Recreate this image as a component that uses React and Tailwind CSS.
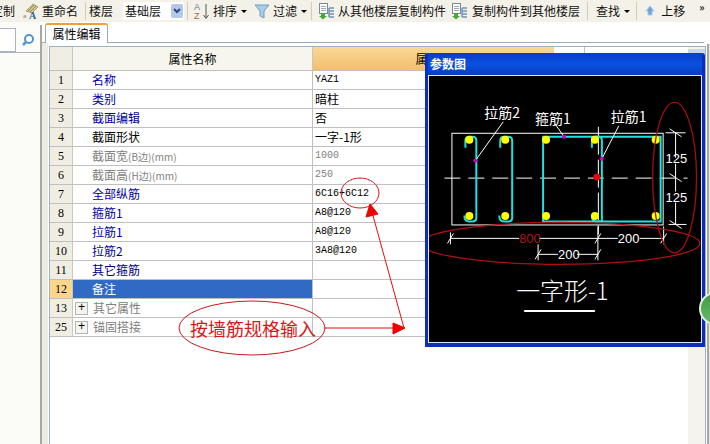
import React from 'react';

const rows = [
  { n: '1', name: '名称', value: 'YAZ1', c: 'text-[#0000a0]' },
  { n: '2', name: '类别', value: '暗柱', c: 'text-[#0000a0]' },
  { n: '3', name: '截面编辑', value: '否', c: 'text-[#0000a0]' },
  { n: '4', name: '截面形状', value: '一字-1形', c: 'text-black' },
  { n: '5', name: '截面宽', unit: '(B边)(mm)', value: '1000', c: 'text-[#808080]', gray: true },
  { n: '6', name: '截面高', unit: '(H边)(mm)', value: '250', c: 'text-[#808080]', gray: true },
  { n: '7', name: '全部纵筋', value: '6C16+6C12', c: 'text-[#0000a0]' },
  { n: '8', name: '箍筋1', value: 'A8@120', c: 'text-[#0000a0]' },
  { n: '9', name: '拉筋1', value: 'A8@120', c: 'text-[#0000a0]' },
  { n: '10', name: '拉筋2', value: '3A8@120', c: 'text-[#0000a0]' },
  { n: '11', name: '其它箍筋', value: '', c: 'text-[#000080]' },
  { n: '12', name: '备注', value: '', c: 'text-white', selected: true },
  { n: '13', name: '其它属性', value: '', c: 'text-[#808080]', plus: true },
  { n: '25', name: '锚固搭接', value: '', c: 'text-[#808080]', plus: true },
];

const Sep = ({ className }) => <div className={`w-px h-[18px] bg-[#d0ccb8] ${className}`} />;
const Caret = () => <span className="ml-[4px] w-0 h-0 border-x-[3px] border-x-transparent border-t-[3px] border-t-black" />;

function CopyIcon() {
  return (
    <svg width="17" height="18" viewBox="0 0 17 18">
      <rect x="1.500" y="1.500" width="8" height="10" fill="#fff" stroke="#7a8a9a" />
      <path d="M3 4.500h5M3 6.500h5M3 8.500h5" stroke="#9ab" />
      <path d="M3 11h4v3h2l-4 3.500L1 14h2z" fill="#4aa83a" />
      <path d="M11 6h5M11 9h5M11 12h5M11 15h5M11 6v9" stroke="#6f93b8" strokeWidth="1.500" fill="none" />
    </svg>
  );
}

function Toolbar() {
  return (
    <div className="h-[22px] shrink-0 flex items-center bg-[#f4f2e8] text-[12px] text-[#111] whitespace-nowrap overflow-hidden">
      <span className="-ml-[9px]">定制</span>
      <svg className="ml-[8px]" width="16" height="16" viewBox="0 0 16 16">
        <path d="M3 8l7-7 5 3-6 6z" fill="#d8c890" stroke="#a8a070" />
        <path d="M5 8l6-6M7 9l6-6" stroke="#8a8a60" />
        <text x="0" y="15" fontSize="6" fontFamily="Liberation Sans" fill="#808878">a</text>
        <text x="6" y="16" fontSize="10" fontWeight="700" fontFamily="Liberation Serif" fill="#27609c">A</text>
      </svg>
      <span className="ml-[3px]">重命名</span>
      <Sep className="ml-[7px] mr-[3px]" />
      <span>楼层</span>
      <div className="ml-[10px] w-[61px] h-[18px] bg-white flex items-center justify-between">
        <span className="ml-[2px]">基础层</span>
        <span className="w-[12px] h-[14px] bg-[#b4c8ea] flex items-center justify-center rounded-[2px] mr-[1px]">
          <svg width="8" height="6" viewBox="0 0 8 6"><path d="M1 1l3 3 3-3" stroke="#2a4a80" strokeWidth="2" fill="none" /></svg>
        </span>
      </div>
      <Sep className="ml-[3px] mr-[5px]" />
      <svg width="18" height="18" viewBox="0 0 18 18">
        <text x="1" y="8" fontSize="9" fontFamily="Liberation Sans" fill="#5a7aa0">A</text>
        <text x="1" y="17" fontSize="9" fontFamily="Liberation Sans" fill="#a06a50">Z</text>
        <path d="M13 2v14M10.500 13l2.500 3.500 2.500-3.500" stroke="#555" fill="none" />
      </svg>
      <span className="ml-[2px]">排序</span>
      <Caret />
      <svg className="ml-[7px]" width="16" height="16" viewBox="0 0 16 16">
        <path d="M1 2h14L10 8v7l-4-2V8z" fill="#a8cdea" stroke="#6f9cc4" />
      </svg>
      <span className="ml-[3px]">过滤</span>
      <Caret />
      <Sep className="ml-[4px] mr-[6px]" />
      <CopyIcon />
      <span className="ml-[3px]">从其他楼层复制构件</span>
      <span className="ml-[5px]"><CopyIcon /></span>
      <span className="ml-[4px]">复制构件到其他楼层</span>
      <Sep className="ml-[7px] mr-[8px]" />
      <span>查找</span>
      <Caret />
      <Sep className="ml-[6px] mr-[8px]" />
      <svg width="10" height="12" viewBox="0 0 10 12"><path d="M5 1l4 5H7v4H3V6H1z" fill="#6aa6dc" stroke="#a8c8e8" /></svg>
      <span className="ml-[6px]">上移</span>
      <span className="ml-[14px] -mt-[8px] text-[10px] font-bold">»</span>
    </div>
  );
}

function Row({ r }) {
  const mono = /^[A-Z0-9]/.test(r.value);
  return (
    <div className="grid grid-cols-[23px_240px_241px_1fr] h-[19px] border-b border-[#c0c0c0]">
      <div className={`border-r border-[#c8c8c0] flex items-center justify-center text-[12px] font-['Liberation_Serif',serif] ${r.selected ? 'bg-[#fcd68a]' : 'bg-[#f0eee2]'}`}>{r.n}</div>
      <div className={`flex items-center border-r border-[#c0c0c0] ${r.selected ? 'bg-[#316ac5]' : ''} ${r.plus ? 'pl-[2px]' : 'pl-[19px]'} ${r.c}`}>
        {r.plus && (
          <span className="w-[13px] h-[13px] mr-[5px] border border-[#b4b4b0] bg-[#f4f4f0] flex items-center justify-center text-black font-['Liberation_Mono',monospace] text-[12px] leading-none">+</span>
        )}
        <span>{r.name}{r.unit && <span className="text-[10px]">{r.unit}</span>}</span>
      </div>
      <div className={`flex items-center pl-[2px] ${r.gray ? 'text-[#808080]' : 'text-black'} ${mono ? "font-['Liberation_Mono',monospace] text-[10px]" : ''}`}>{r.value}</div>
      <div />
    </div>
  );
}

function Drawing() {
  const dots = [469, 505, 546, 595, 656];
  const white = { stroke: '#fff', fill: 'none' };
  return (
    <svg className="block w-full h-full" viewBox="430 75 270 267" fontFamily="'Noto Sans CJK SC', sans-serif">
      <rect x="451.500" y="132.500" width="212" height="92" {...white} />
      <path d="M444 177.500h244" stroke="#fff" strokeDasharray="16 8" />
      <path d="M598.500 126v108" stroke="#fff" strokeDasharray="28 5" />
      <g stroke="#22e0e0" strokeWidth="2" fill="none">
        <path d="M465 147v-7q0-4 4-4h3q4 0 4 4v77q0 4-4 4h-3q-5 0-5-6" />
        <path d="M500 147v-7q0-4 4-4h4q4 0 4 4v77q0 4-4 4h-4q-5 0-5-6" />
        <path d="M543 136h118v85h-118z" />
        <path d="M592 147v-7q0-4 4-4h3q3 0 3 4v81h-6q-4 0-4-6" />
      </g>
      {dots.map((x) => (
        <g key={x} fill="#ffff00">
          <circle cx={x} cy="139" r="4" />
          <circle cx={x} cy="215.500" r="4" />
        </g>
      ))}
      <circle cx="597" cy="176.500" r="3.500" fill="#f00000" />
      <g stroke="#fff">
        <path d="M475 160l28-39M564 136l-9-13M602 158l17-33" />
        <path d="M676 132v25M676 163v28M676 202v22M666 132h20M669 224h18M670 128l12 8M670 173l12 8M670 220l12 8" fill="none" />
        <path d="M450 238h69M539 238h79M640 238h24M450 232v12M598 226v34M664 226v18M447 243l6-10M595 243l6-10M661 243l6-10" fill="none" />
        <path d="M538 254h20M577 254h21M538 244v16M535 259l6-10M595 259l6-10" fill="none" />
      </g>
      <g fill="#d000c8">
        <circle cx="475" cy="160" r="2" />
        <circle cx="564" cy="136" r="2" />
        <circle cx="602" cy="158" r="2" />
      </g>
      <g fill="#fff" fontSize="14">
        <text x="484" y="117">拉筋2</text>
        <text x="535" y="123">箍筋1</text>
        <text x="611" y="121">拉筋1</text>
      </g>
      <g fill="#fff" fontSize="13" fontFamily="'Liberation Sans', sans-serif">
        <text x="666" y="162">125</text>
        <text x="666" y="201">125</text>
        <text x="618" y="243">200</text>
        <text x="558" y="259">200</text>
      </g>
      <text x="519" y="243" fill="#b01818" fontSize="13" fontFamily="'Liberation Sans', sans-serif">800</text>
      <text x="516" y="300" fill="#fff" fontSize="24" fontWeight="300">一字形-1</text>
      <path d="M524 311h71" stroke="#fff" strokeWidth="2" />
      <ellipse cx="560.500" cy="243" rx="140" ry="21" fill="none" stroke="#b01010" strokeWidth="1.300" />
      <ellipse cx="675" cy="177" rx="22" ry="75.500" fill="none" stroke="#a01010" strokeWidth="1.300" />
    </svg>
  );
}

function ParamWindow() {
  return (
    <div className="absolute left-[425px] top-[53px] w-[280px] h-[294px] flex flex-col bg-[#0a2fc0] rounded-t-[3px] px-[3px] pb-[4px]">
      <div className="h-[22px] shrink-0 flex items-center pl-[2px] text-white text-[12px] font-bold bg-gradient-to-b from-[#0a3cc8] via-[#0a50e0] to-[#0640c0]">参数图</div>
      <div className="flex-1 border border-[#dce8ff] bg-black min-h-0">
        <Drawing />
      </div>
    </div>
  );
}

export default function App() {
  return (
    <div className="relative w-[710px] h-[444px] flex flex-col overflow-hidden bg-white font-['Noto_Sans_CJK_SC','Liberation_Sans',sans-serif] text-[12px] leading-none">
      <Toolbar />
      <div className="flex-1 flex min-h-0">
        <div className="w-[40px] shrink-0 pt-[6px] bg-[#fbfbf8]">
          <div className="flex h-[25px] border-b border-[#a8b4c0]">
            <div className="w-[16px] border-y border-r border-[#a8b4c0] bg-white" />
            <div className="flex-1 flex items-center justify-center">
              <svg width="14" height="14" viewBox="0 0 14 14"><circle cx="8" cy="6" r="4" fill="#fff" stroke="#4f96d8" strokeWidth="2" /><path d="M5 9l-3 3" stroke="#4f96d8" strokeWidth="2.500" /></svg>
            </div>
          </div>
        </div>
        <div className="w-[2px] shrink-0 bg-[#a8a8a0] mt-[3px]" />
        <div className="flex-1 min-w-0 flex flex-col">
          <div className="h-[21px] shrink-0 flex items-end pl-[3px] mr-[3px] border-b border-[#a0a8b0]">
            <div className="w-[63px] h-[20px] -mb-px bg-white border border-b-0 border-[#a0a8b0] border-t-2 border-t-[#f0a030] rounded-t-[3px] flex items-center justify-center">属性编辑</div>
          </div>
          <div className="flex-1 flex min-h-0 pl-[6px] bg-[#ecebe4]">
            <div className="flex-1 min-w-0 flex bg-white pl-px pt-[3px]">
              <div className="mr-px flex-1 min-w-0 flex border-l border-t border-r border-[#a0b0c4]">
                <div className="flex-1 min-w-0 flex flex-col">
                  <div className="grid grid-cols-[23px_240px_241px_1fr] h-[24px] shrink-0 border-b border-[#c0c0c0]">
                    <div className="bg-[#f0eee2] border-r border-[#c8c8c0]" />
                    <div className="flex items-center justify-center bg-[#f7f6ee] border-r border-[#c8c8c0]">属性名称</div>
                    <div className="flex items-center justify-center bg-gradient-to-b from-[#f8d898] to-[#f3bf6b]">属性值</div>
                    <div className="ml-[30px] border-l border-[#c0c0c0]" />
                  </div>
                  {rows.map((r) => <Row key={r.n} r={r} />)}
                </div>
                <div className="w-[17px] shrink-0 bg-[#f4f3ee] flex flex-col">
                  <div className="h-[6px] mt-[2px] bg-[#c8d4e8]" />
                </div>
              </div>
            </div>
          </div>
        </div>
        <div className="w-[3px] shrink-0 border-l-2 border-[#a8a8a0] bg-[#e8e8e0] mt-[22px]" />
      </div>

      <ParamWindow />

      {/* red markup drawn over the page */}
      <svg className="absolute left-0 top-0 pointer-events-none" width="425" height="444" viewBox="0 0 425 444">
        <ellipse cx="360" cy="193" rx="19" ry="15" fill="none" stroke="#d81818" />
        <ellipse cx="252" cy="328" rx="73" ry="27" fill="none" stroke="#c81818" />
        <path d="M324 328h74M404 328L372 212" stroke="#e01010" fill="none" />
        <path d="M393 323l12 5-12 6zM370 204l-4 13 12-3z" fill="#f00000" stroke="#f00000" />
      </svg>
      <span className="absolute left-[190px] top-[319px] text-[18px] text-[#d81818] whitespace-nowrap">按墙筋规格输入</span>

      <div className="absolute left-[699px] top-[292px] w-[33px] h-[33px] rounded-full bg-gradient-to-b from-[#3f9a42] to-[#66bb6a] border-2 border-[#e4ece4]" />
    </div>
  );
}
